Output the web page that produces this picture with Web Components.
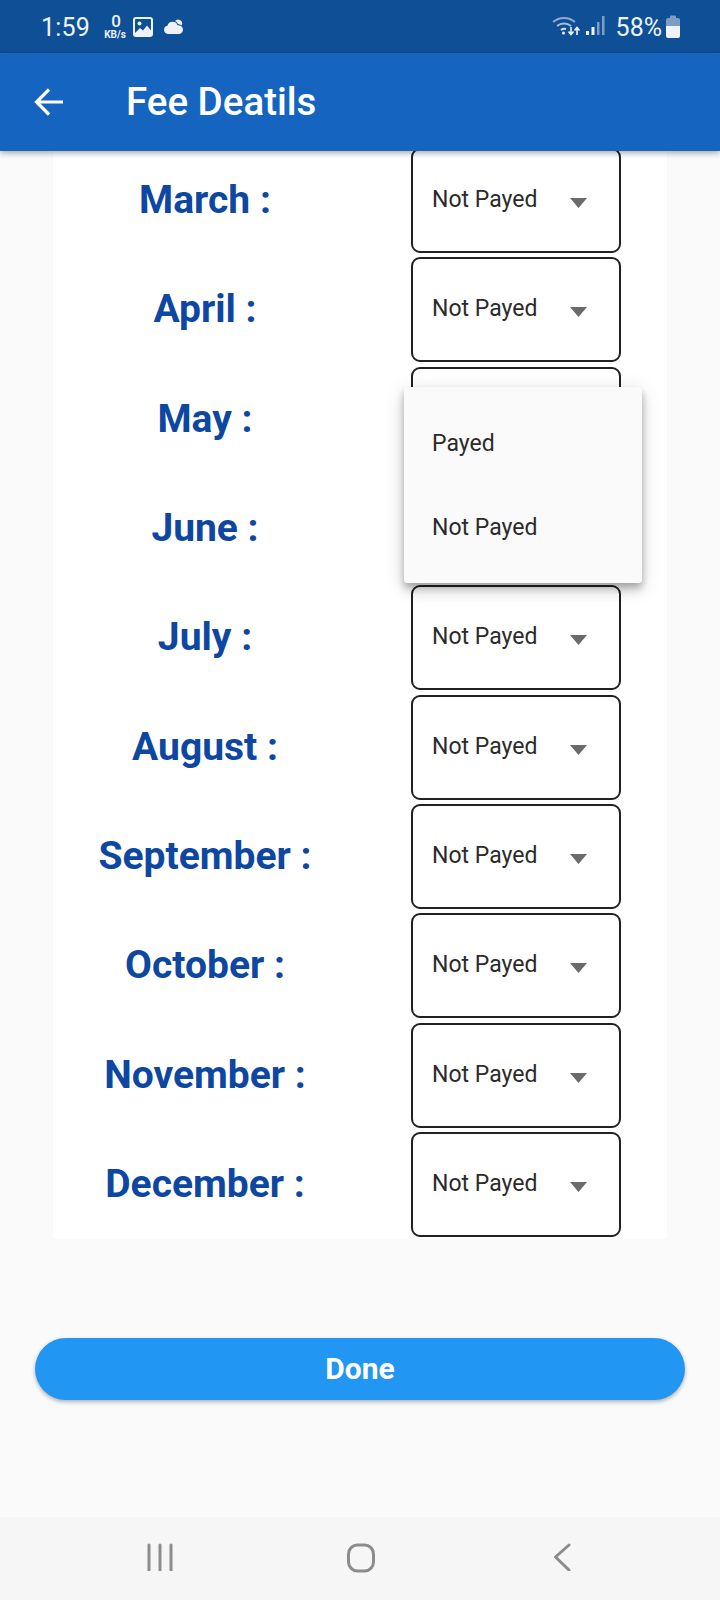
<!DOCTYPE html>
<html lang="en">
<head>
<meta charset="utf-8">
<title>Fee Deatils</title>
<style>
  html, body { margin: 0; padding: 0; }
  body { width: 720px; height: 1600px; overflow: hidden; background: #fafafa; font-family: Roboto, "Liberation Sans", sans-serif; }
</style>
</head>
<body>
<fee-screen>
  <status-bar slot="status"></status-bar>
  <app-bar slot="appbar" title="Fee Deatils"></app-bar>
  <fee-card>
    <month-row month="March" value="Not Payed"></month-row>
    <month-row month="April" value="Not Payed"></month-row>
    <month-row month="May"></month-row>
    <month-row month="June"></month-row>
    <month-row month="July" value="Not Payed"></month-row>
    <month-row month="August" value="Not Payed"></month-row>
    <month-row month="September" value="Not Payed"></month-row>
    <month-row month="October" value="Not Payed"></month-row>
    <month-row month="November" value="Not Payed"></month-row>
    <month-row month="December" value="Not Payed"></month-row>
    <pay-menu slot="overlay"></pay-menu>
  </fee-card>
  <done-button>Done</done-button>
  <nav-bar slot="nav"></nav-bar>
</fee-screen>

<script>
// helper: every component has the same shadow root setup
class Base extends HTMLElement {
  constructor() {
    super();
    this.attachShadow({ mode: 'open' });
  }
}

class FeeScreen extends Base {
  connectedCallback() {
    this.shadowRoot.innerHTML = /*html*/`
      <style>
        :host { display: flex; flex-direction: column; width: 720px; height: 1600px; background: #fafafa; overflow: hidden; }
        main { flex: 1; min-height: 0; display: flex; flex-direction: column; }
        .top { position: relative; z-index: 2; }
      </style>
      <div class="top"><slot name="status"></slot><slot name="appbar"></slot></div>
      <main><slot></slot></main>
      <slot name="nav"></slot>
    `;
  }
}

class StatusBar extends Base {
  connectedCallback() {
    this.shadowRoot.innerHTML = /*html*/`
      <style>
        :host { display: flex; align-items: flex-start; height: 53px; background: #0f4f96; color: #eef3f9; box-sizing: border-box; padding-left: 41px; font-family: Roboto, sans-serif; }
        .time { font-size: 25px; line-height: 25px; margin-top: 15px; width: 57px; letter-spacing: .2px; }
        .speed { width: 34px; display: flex; flex-direction: column; align-items: center; margin-top: 13px; }
        .speed b { font-size: 17px; line-height: 17px; font-weight: 500; margin-left: 2px; }
        .speed small { font-size: 10px; line-height: 10px; font-weight: 700; }
        svg { display: block; flex: none; }
        .pic { margin-top: 17px; margin-left: 1px; }
        .cloud { margin-top: 18px; margin-left: 10px; }
        .right { margin-left: auto; display: flex; align-items: flex-start; }
        .wifi { margin-top: 15px; }
        .signal { margin-top: 15px; margin-left: 5px; }
        .pct { font-size: 25px; line-height: 25px; margin: 15px 0 0 11px; }
        .batt { margin: 15px 40px 0 4px; }
      </style>
      <span class="time">1:59</span>
      <span class="speed"><b>0</b><small>KB/s</small></span>
      <svg class="pic" width="20" height="20" viewBox="0 0 20 20">
        <rect x="1" y="1" width="18" height="18" rx="2" fill="none" stroke="#eef3f9" stroke-width="2"/>
        <circle cx="6.5" cy="6.5" r="2" fill="#eef3f9"/>
        <path d="M2 16l5-5 3 2.5 4-5 4 5V18H2z" fill="#eef3f9"/>
      </svg>
      <svg class="cloud" width="21" height="17" viewBox="0 0 21 17">
        <path d="M12 3a4 4 0 0 1 6.5 4.600A4.500 4.500 0 0 0 15 6a5 5 0 0 0-3-3z" fill="#eef3f9"/>
        <path d="M5 16a4.200 4.200 0 0 1-.6-8.300 5.400 5.400 0 0 1 10.200-.4A4.400 4.400 0 0 1 16.500 16z" fill="#eef3f9"/>
      </svg>
      <div class="right">
        <svg class="wifi" width="29" height="21" viewBox="0 0 29 21" fill="none">
          <path d="M1 7a17 17 0 0 1 22 0" stroke="#8fa9cb" stroke-width="2"/>
          <path d="M5 11a11.500 11.500 0 0 1 14 0" stroke="#a9bdd7" stroke-width="2"/>
          <path d="M9 15a5.500 5.500 0 0 1 5 -1" stroke="#d5dfec" stroke-width="2"/>
          <circle cx="11.500" cy="18" r="1.500" fill="#eef3f9"/>
          <path d="M19 12v7M16.500 16.500l2.500 3 2.500-3" stroke="#eef3f9" stroke-width="1.600"/>
          <path d="M25 20v-7M22.500 15.500l2.500-3 2.500 3" stroke="#eef3f9" stroke-width="1.600"/>
        </svg>
        <svg class="signal" width="19" height="21" viewBox="0 0 19 21">
          <rect x="0" y="16" width="3" height="4" fill="#eef3f9"/>
          <rect x="5.500" y="12" width="3" height="8" fill="#eef3f9"/>
          <rect x="11" y="7" width="2.500" height="13" fill="#7f9cc2"/>
          <rect x="16" y="1" width="2.500" height="19" fill="#7f9cc2"/>
        </svg>
        <span class="pct">58%</span>
        <svg class="batt" width="14" height="23" viewBox="0 0 14 23">
          <path d="M4 1.500a1 1 0 0 1 1-1h4a1 1 0 0 1 1 1V3h2a2 2 0 0 1 2 2v6H0V5a2 2 0 0 1 2-2h2z" fill="#7f9cc2"/>
          <path d="M0 11h14v10a2 2 0 0 1-2 2H2a2 2 0 0 1-2-2z" fill="#eef3f9"/>
        </svg>
      </div>
    `;
  }
}

class AppBar extends Base {
  connectedCallback() {
    this.shadowRoot.innerHTML = /*html*/`
      <style>
        :host { display: flex; align-items: center; height: 98px; background: #1565c0; color: #fff; box-shadow: 0 2px 6px rgba(0,0,0,.35); font-family: Roboto, sans-serif; }
        svg { display: block; margin-left: 34px; flex: none; }
        h1 { margin: 0 0 0 62px; font-size: 38.500px; font-weight: 500; line-height: 44px; }
      </style>
      <svg width="30" height="30" viewBox="0 0 30 30" fill="none" stroke="#fff" stroke-width="3.200">
        <path d="M29 15H3M15 2.500 2.500 15 15 27.500"/>
      </svg>
      <h1>${this.getAttribute('title')}</h1>
    `;
  }
}

class FeeCard extends Base {
  connectedCallback() {
    this.shadowRoot.innerHTML = /*html*/`
      <style>
        :host { display: grid; position: relative; row-gap: 4.350px; margin: -3px 53px 0; padding-bottom: 2px; background: #fff; }
      </style>
      <slot></slot>
      <slot name="overlay"></slot>
    `;
  }
}

class MonthRow extends Base {
  connectedCallback() {
    const value = this.getAttribute('value') || '';
    this.shadowRoot.innerHTML = /*html*/`
      <style>
        :host { display: grid; grid-template-columns: 304px 210px; column-gap: 54px; align-items: center; height: 105px; font-family: Roboto, sans-serif; }
        .label { text-align: center; color: #0d47a1; font-size: 39px; font-weight: 700; line-height: 44px; margin-top: -1px; }
        .select { box-sizing: border-box; height: 105px; border: 2px solid #212121; border-radius: 9px; display: flex; padding: 0 32px 0 19px; }
        .value { flex: 1; color: #2b2b2b; font-size: 23px; line-height: 28px; margin-top: 36px; }
        svg { display: block; margin-top: 48px; flex: none; }
      </style>
      <div class="label">${this.getAttribute('month')} :</div>
      <div class="select">
        <span class="value">${value}</span>
        <svg width="17" height="10" viewBox="0 0 17 10"><path d="M0 0h17L8.500 10z" fill="#6b6b6b"/></svg>
      </div>
    `;
  }
}

class PayMenu extends Base {
  connectedCallback() {
    this.shadowRoot.innerHTML = /*html*/`
      <style>
        /* sits over the May and June rows, like the open dropdown */
        :host { position: absolute; left: 351px; top: 239px; width: 238px; height: 196px; box-sizing: border-box; display: flex; flex-direction: column; justify-content: center; background: #fafafa; border-radius: 3px; box-shadow: 0 8px 12px rgba(0,0,0,.14), 0 4px 22px rgba(0,0,0,.12), 0 4px 6px rgba(0,0,0,.2); font-family: Roboto, sans-serif; }
        div { height: 84px; display: flex; align-items: center; padding-left: 28px; color: #2b2b2b; font-size: 23px; }
      </style>
      <div>Payed</div>
      <div>Not Payed</div>
    `;
  }
}

class DoneButton extends Base {
  connectedCallback() {
    this.shadowRoot.innerHTML = /*html*/`
      <style>
        :host { display: flex; align-items: center; justify-content: center; height: 62px; padding-bottom: 2px; box-sizing: border-box; margin: 99px 35px 0; background: #2196f3; color: #fff; border-radius: 32px; box-shadow: 0 2px 4px rgba(0,0,0,.3); font-family: Roboto, sans-serif; font-size: 30px; font-weight: 700; }
      </style>
      <slot></slot>
    `;
  }
}

class NavBar extends Base {
  connectedCallback() {
    this.shadowRoot.innerHTML = /*html*/`
      <style>
        :host { display: grid; grid-template-columns: 320px 80px 320px; height: 83px; background: #f6f6f6; }
        svg { display: block; margin-top: 26px; }
        .a { margin-left: 146px; }
        .b { margin-left: 26px; }
        .c { margin-left: 152px; }
      </style>
      <svg class="a" width="28" height="28" viewBox="0 0 28 28" stroke="#8c8c8c" stroke-width="3" stroke-linecap="round">
        <path d="M3 2v25M14 2v25M25 2v25"/>
      </svg>
      <svg class="b" width="30" height="30" viewBox="0 0 30 30" fill="none" stroke="#8c8c8c" stroke-width="3">
        <rect x="2.500" y="2" width="25" height="26" rx="9"/>
      </svg>
      <svg class="c" width="20" height="28" viewBox="0 0 20 28" fill="none" stroke="#8c8c8c" stroke-width="3" stroke-linecap="round" stroke-linejoin="round">
        <path d="M17 2 3.500 14 17 27"/>
      </svg>
    `;
  }
}

customElements.define('fee-screen', FeeScreen);
customElements.define('status-bar', StatusBar);
customElements.define('app-bar', AppBar);
customElements.define('fee-card', FeeCard);
customElements.define('month-row', MonthRow);
customElements.define('pay-menu', PayMenu);
customElements.define('done-button', DoneButton);
customElements.define('nav-bar', NavBar);
</script>
</body>
</html>
